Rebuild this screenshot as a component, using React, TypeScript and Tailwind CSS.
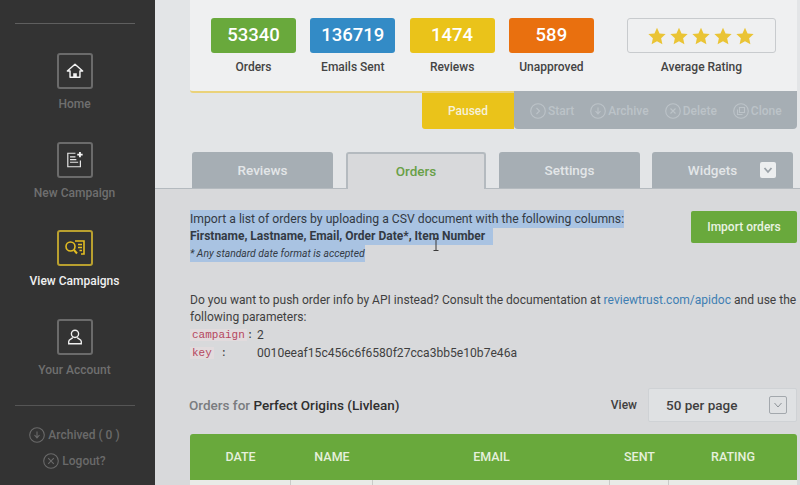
import { ReactNode } from "react";

const navItems = [
    { label: "Home", active: false, icon: "home" },
    { label: "New Campaign", active: false, icon: "new" },
    { label: "View Campaigns", active: true, icon: "view" },
    { label: "Your Account", active: false, icon: "account" },
];

const stats = [
    { value: "53340", label: "Orders", color: "bg-[#69a93c]" },
    { value: "136719", label: "Emails Sent", color: "bg-[#338bc6]" },
    { value: "1474", label: "Reviews", color: "bg-[#eac31a]" },
    { value: "589", label: "Unapproved", color: "bg-[#e9700f]" },
];

const NavIcon = ({ name }: { name: string }) => {
    if (name === "home") {
        return (
            <svg width="18" height="18" viewBox="0 0 20 20" fill="none" stroke="#f2f2f2" strokeWidth="1.6">
                <path d="M1.5 10 10 2.5 18.500 10h-3v7h-11v-7z" strokeLinejoin="round" />
                <rect x="8" y="12.500" width="4" height="4.500" fill="#f2f2f2" stroke="none" />
            </svg>
        );
    }
    if (name === "new") {
        return (
            <svg width="18" height="18" viewBox="0 0 20 20" fill="none" stroke="#e8e8e8" strokeWidth="1.300">
                <path d="M10.500 2.500H2v15h14v-7" />
                <path d="M4.500 6.500h6M4.500 9.500h7M4.500 12.500h9" />
                <path d="M15.500 1v6M12.500 4h6" strokeWidth="2" stroke="#f5f5f5" />
            </svg>
        );
    }
    if (name === "view") {
        return (
            <svg width="22" height="18" viewBox="0 0 22 18" fill="none" stroke="#e3bd22" strokeWidth="1.600">
                <circle cx="6.500" cy="7.500" r="4.500" />
                <path d="m10 11 3 3.500" strokeWidth="2" />
                <path d="M11 2h9v13h-3M14 5.500h4M14 8.500h4M15.500 11.500h2.500" />
            </svg>
        );
    }
    return (
        <svg width="18" height="18" viewBox="0 0 20 20" fill="none" stroke="#f0f0f0" strokeWidth="1.500">
            <circle cx="10" cy="6.500" r="4" />
            <path d="M7.500 10.500c-.2 1.500-4.500 2-4.500 4.500v2.500h14V15c0-2.500-4.300-3-4.500-4.500" />
        </svg>
    );
};

const CircleIcon = ({ size, color, children }: { size: number; color: string; children: ReactNode }) => (
    <svg width={size} height={size} viewBox="0 0 16 16" fill="none" stroke={color} strokeWidth="1.100">
        <circle cx="8" cy="8" r="7.300" />
        {children}
    </svg>
);

const Star = () => (
    <svg width="18" height="18" viewBox="0 0 24 24" fill="#eac435">
        <path d="M12 1l3.400 7.500 8.100.9-6 5.500 1.700 8.100-7.200-4.100-7.200 4.100 1.700-8.100-6-5.500 8.100-.9z" />
    </svg>
);

const Sidebar = () => (
    <aside className="w-[155px] h-full shrink-0 bg-[#333333] flex flex-col items-center pt-[23px] pr-[6px]">
        <div className="w-[120px] h-px bg-[#5f5f5f]" />
        <div className="mt-[29px] flex flex-col items-center gap-[28.5px]">
            {navItems.map((item) => (
                <div key={item.label} className="flex flex-col items-center h-[60px]">
                    <div
                        className={`w-[36px] h-[36px] rounded-[3px] border-2 flex items-center justify-center ${
                            item.active ? "border-[#b9a02f]" : "border-[#6b6b6b]"
                        }`}
                    >
                        <NavIcon name={item.icon} />
                    </div>
                    <span
                        className={`mt-[7px] text-[12px] leading-[16px] font-medium whitespace-nowrap ${
                            item.active ? "text-[#f0f0f0]" : "text-[#6f6f6f]"
                        }`}
                    >
                        {item.label}
                    </span>
                </div>
            ))}
        </div>
        <div className="mt-[26px] w-[120px] h-px bg-[#555555]" />
        <div className="mt-[19px] flex items-center gap-[3px] text-[12px] leading-[20px] font-medium text-[#6a6a6a]">
            <CircleIcon size={16} color="#6a6a6a">
                <path d="M8 4.500v6M5.500 8 8 10.800 10.500 8" />
            </CircleIcon>
            Archived ( 0 )
        </div>
        <div className="mt-[6px] flex items-center gap-[3px] text-[12px] leading-[20px] font-medium text-[#6a6a6a]">
            <CircleIcon size={16} color="#6a6a6a">
                <path d="m5.200 5.200 5.600 5.600M10.800 5.200l-5.600 5.600" />
            </CircleIcon>
            Logout?
        </div>
    </aside>
);

const ActionItem = ({ label, children }: { label: string; children: ReactNode }) => (
    <span className="flex items-center gap-[2px]">
        <CircleIcon size={16} color="#bcc3c8">
            {children}
        </CircleIcon>
        {label}
    </span>
);

const TopPanel = () => (
    <div className="h-[189px] shrink-0 bg-[#e3e5e7] border-b border-[#b4babf] pl-[35px] pr-[3px] flex flex-col">
        <div className="relative z-10 h-[93px] shrink-0 bg-[#eff0f1] rounded-bl-[3px] border-b-2 border-[#ead27a] pl-[21px] pr-[20px] pt-[18px] flex">
            {stats.map((s) => (
                <div key={s.label} className="w-[85px] mr-[14.300px] flex flex-col items-center">
                    <div className={`w-full h-[35px] rounded-[3px] flex items-center justify-center text-white text-[18.500px] font-medium ${s.color}`}>
                        {s.value}
                    </div>
                    <span className="mt-[6px] text-[12px] leading-[16px] text-[#444444] font-medium whitespace-nowrap">{s.label}</span>
                </div>
            ))}
            <div className="ml-[18.800px] w-[149px] flex flex-col items-center">
                <div className="w-full h-[35px] rounded-[3px] border border-[#c8cbce] flex items-center justify-center gap-[4px]">
                    <Star />
                    <Star />
                    <Star />
                    <Star />
                    <Star />
                </div>
                <span className="mt-[6px] text-[12px] leading-[16px] text-[#444444] font-medium">Average Rating</span>
            </div>
        </div>
        <div className="flex justify-end h-[36px] shrink-0 text-[12px] font-medium">
            <div className="w-[92px] bg-[#eac31a] rounded-bl-[3px] flex items-center justify-center text-[#f6f1d8]">Paused</div>
            <div className="relative z-20 w-[283px] h-[38px] mt-[-2px] bg-[#a6aeb4] rounded-b-[4px] pl-[16px] pt-[2px] flex items-center gap-[16px] text-[#bcc3c8]">
                <ActionItem label="Start">
                    <path d="M6.500 5 9.500 8l-3 3" />
                </ActionItem>
                <ActionItem label="Archive">
                    <path d="M8 4.500v6M5.500 8 8 10.800 10.500 8" />
                </ActionItem>
                <ActionItem label="Delete">
                    <path d="m5.500 5.500 5 5M10.500 5.500l-5 5" />
                </ActionItem>
                <ActionItem label="Clone">
                    <path d="M6.500 4.500h5v5h-5zM4.500 6.500v5h5" />
                </ActionItem>
            </div>
        </div>
        <div className="mt-auto flex pl-[2px] text-[13.500px] font-medium">
            <div className="w-[141px] h-[36px] bg-[#a6aeb4] rounded-t-[3px] flex items-center justify-center text-[#e3e6e8]">Reviews</div>
            <div className="ml-[13px] w-[140px] h-[37px] mb-[-1px] bg-[#d8d9db] rounded-t-[3px] border-2 border-b-0 border-[#b4babf] flex items-center justify-center text-[#69a047]">Orders</div>
            <div className="ml-[13px] w-[141px] h-[36px] bg-[#a6aeb4] rounded-t-[3px] flex items-center justify-center text-[#e3e6e8]">Settings</div>
            <div className="relative ml-[12px] w-[141px] h-[36px] pr-[20px] bg-[#a6aeb4] rounded-t-[3px] flex items-center justify-center text-[#e3e6e8]">
                Widgets
                <span className="absolute right-[17px] top-[10px] w-[16px] h-[16px] bg-[#eceeef] rounded-[2px] flex items-center justify-center">
                    <svg width="10" height="10" viewBox="0 0 10 10" fill="none" stroke="#9aa2a8" strokeWidth="1.800">
                        <path d="M1.500 3 5 7l3.500-4" />
                    </svg>
                </span>
            </div>
        </div>
    </div>
);

const Content = () => (
    <div className="relative flex-1 min-h-0 bg-[#d8d9db] pl-[35px] pr-[3px] pt-[21px] text-[12px] text-[#3f3f3f]">
        <div className="flex justify-between items-start">
            <div className="text-[#333a44]">
                <p className="w-[434px] h-[18px] leading-[18px] text-[12.200px] bg-[#a9c3e2] whitespace-nowrap">Import a list of orders by uploading a CSV document with the following columns:</p>
                <p className="w-[303px] h-[17px] leading-[17px] font-bold bg-[#a9c3e2] whitespace-nowrap">Firstname, Lastname, Email, Order Date*, Item Number</p>
                <p className="w-[175px] h-[17px] leading-[17px] text-[10.350px] italic bg-[#a9c3e2] whitespace-nowrap">* Any standard date format is accepted</p>
            </div>
            <div className="w-[106px] h-[32px] mt-[1px] bg-[#69a93c] rounded-[2px] flex items-center justify-center text-[#eaf3e2] font-medium">Import orders</div>
        </div>
        <svg className="absolute left-[278px] top-[49px]" width="6" height="13" viewBox="0 0 6 13" fill="none" stroke="#3a3a3a" strokeWidth="1">
            <path d="M.5 .5h5M3 .5v12M.5 12.500h5" />
        </svg>
        <p className="mt-[29px] leading-[18px] text-[12.060px] whitespace-nowrap">
            Do you want to push order info by API instead? Consult the documentation at <span className="text-[#3f7fb3]">reviewtrust.com/apidoc</span> and use the
        </p>
        <p className="leading-[17px] text-[12.060px]">following parameters:</p>
        <div className="flex items-center h-[18px]">
            <span className="w-[67px] font-['Liberation_Mono',monospace] text-[11px]"><span className="bg-[#e2dbdd] text-[#b5475f] px-[2px]">campaign</span>:</span>
            <span>2</span>
        </div>
        <div className="flex items-center h-[18px]">
            <span className="w-[67px] font-['Liberation_Mono',monospace] text-[11px]"><span className="bg-[#e2dbdd] text-[#b5475f] px-[2px]">key</span> :</span>
            <span className="text-[12.100px]">0010eeaf15c456c6f6580f27cca3bb5e10b7e46a</span>
        </div>
        <div className="mt-[26px] flex items-center h-[34px]">
            <span className="ml-[-1px] text-[#7a7c7f] font-medium text-[13.500px]">Orders for&nbsp;</span>
            <span className="text-[#2f2f2f] font-medium text-[13.500px]">Perfect Origins (Livlean)</span>
            <span className="ml-auto mr-[11px] font-medium">View</span>
            <div className="w-[149px] h-[34px] bg-[#dfe1e3] rounded-[2px] border border-[#cfd2d5] pl-[17px] pr-[9px] flex items-center justify-between text-[13.500px] font-medium">
                50 per page
                <span className="w-[18px] h-[18px] rounded-[2px] border border-[#a3a8ad] flex items-center justify-center">
                    <svg width="10" height="10" viewBox="0 0 10 10" fill="none" stroke="#8d9398" strokeWidth="1">
                        <path d="M1.500 3 5 7l3.500-4" />
                    </svg>
                </span>
            </div>
        </div>
        <div className="mt-[12px] pt-[1px] bg-[#69a93c] rounded-t-[3px] h-[46px] grid grid-cols-[101px_82px_237px_59px_1fr] text-[#e6f0dc] text-[12.500px] font-medium">
            <span className="flex items-center justify-center">DATE</span>
            <span className="flex items-center justify-center">NAME</span>
            <span className="flex items-center justify-center">EMAIL</span>
            <span className="flex items-center justify-center">SENT</span>
            <span className="flex items-center justify-center">RATING</span>
        </div>
        <div className="h-[5px] bg-[#e9ebe7] grid grid-cols-[101px_82px_237px_59px_1fr] divide-x divide-[#c9cbc8]">
            <span />
            <span />
            <span />
            <span />
            <span />
        </div>
    </div>
);

export default function App() {
    return (
        <div className="w-[800px] h-[485px] overflow-hidden flex font-['Roboto',sans-serif]">
            <Sidebar />
            <div className="flex-1 min-w-0 flex flex-col">
                <TopPanel />
                <Content />
            </div>
        </div>
    );
}
